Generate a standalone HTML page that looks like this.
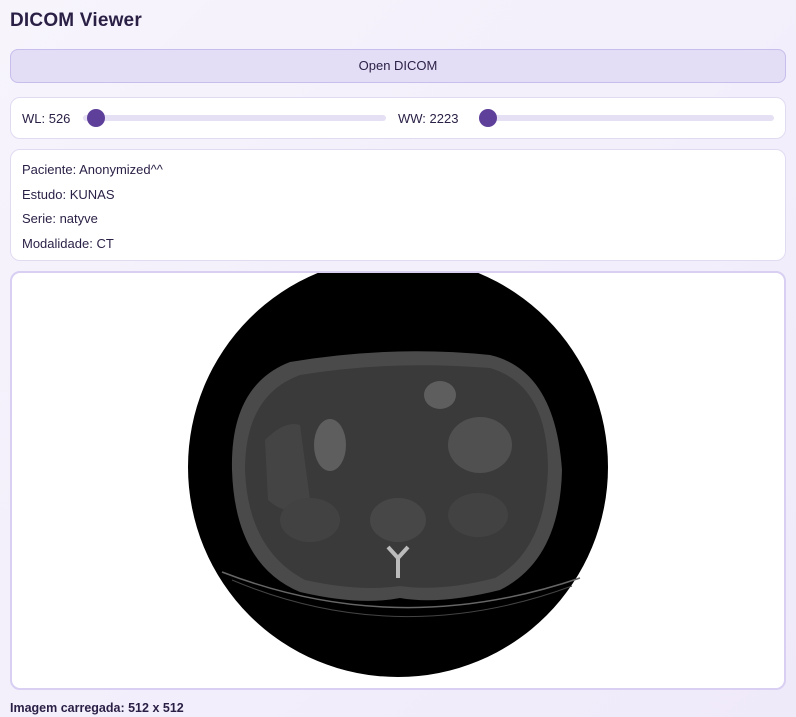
<!DOCTYPE html>
<html><head><meta charset="utf-8"><style>
*{box-sizing:border-box;margin:0;padding:0}
body{width:796px;height:717px;overflow:hidden;background:linear-gradient(135deg,#f7f4fc,#efeafa);font-family:"Liberation Sans",sans-serif;color:#2a1f45;position:relative}
h1{position:absolute;left:10px;top:10px;font-size:19px;font-weight:bold;color:#2a1f45;letter-spacing:0.2px}
.btn{position:absolute;left:10px;top:49px;width:776px;height:34px;background:#e3ddf5;border:1px solid #c8bdec;border-radius:8px;text-align:center;line-height:32px;font-size:13px}
.card{position:absolute;left:10px;width:776px;background:#fff;border:1px solid #e1dbf2;border-radius:10px}
.sl{top:97px;height:42px;font-size:13px}
.lab{position:absolute;top:13px}
.track{position:absolute;top:17px;height:6px;background:#e6e0f4;border-radius:3px}
.th{position:absolute;top:11px;width:18px;height:18px;border-radius:50%;background:#5e3f9a}
.info{top:149px;height:112px;font-size:13px;padding:12px 11px}
.info div{height:24.5px}
.img{top:271px;height:419px;border:2px solid #d8cff2;overflow:hidden}
.foot{position:absolute;left:10px;top:701px;font-size:12.5px;font-weight:bold}
</style></head><body>
<h1>DICOM Viewer</h1>
<div class="btn">Open DICOM</div>
<div class="card sl">
 <span class="lab" style="left:11px">WL: 526</span>
 <div class="track" style="left:72px;width:303px"></div><div class="th" style="left:76px"></div>
 <span class="lab" style="left:387px">WW: 2223</span>
 <div class="track" style="left:468px;width:295px"></div><div class="th" style="left:468px"></div>
</div>
<div class="card info"><div>Paciente: Anonymized^^</div><div>Estudo: KUNAS</div><div>Serie: natyve</div><div>Modalidade: CT</div></div>
<div class="card img">
<svg width="776" height="419" viewBox="10 271 776 419" style="position:absolute;left:-2px;top:-2px">
 <circle cx="398" cy="467" r="210" fill="#000"/>
 <path d="M222 572 Q398 640 580 578" stroke="#666" stroke-width="1.5" fill="none"/>
 <path d="M232 580 Q398 650 572 586" stroke="#444" stroke-width="1" fill="none"/>
 <path d="M232 470 Q230 385 290 362 Q390 345 490 355 Q555 370 562 470 Q560 560 500 590 Q440 605 400 598 Q360 606 300 592 Q235 565 232 470Z" fill="#4a4a4a"/>
 <path d="M245 470 Q245 395 300 375 Q390 360 490 368 Q548 385 548 470 Q545 550 495 578 Q440 592 400 586 Q360 592 305 580 Q248 550 245 470Z" fill="#3a3a3a"/>
 <path d="M265 440 Q285 420 300 425 L310 500 Q290 520 268 500Z" fill="#444"/>
 <ellipse cx="330" cy="445" rx="16" ry="26" fill="#5e5e5e"/>
 <ellipse cx="440" cy="395" rx="16" ry="14" fill="#5e5e5e"/>
 <ellipse cx="480" cy="445" rx="32" ry="28" fill="#505050"/>
 <ellipse cx="310" cy="520" rx="30" ry="22" fill="#424242"/>
 <ellipse cx="478" cy="515" rx="30" ry="22" fill="#424242"/>
 <ellipse cx="398" cy="520" rx="28" ry="22" fill="#474747"/>
 <path d="M388 547 L398 558 L408 547 M398 558 L398 578" stroke="#bbb" stroke-width="4" fill="none"/>
</svg>
</div>
<div class="foot">Imagem carregada: 512 x 512</div>
</body></html>
